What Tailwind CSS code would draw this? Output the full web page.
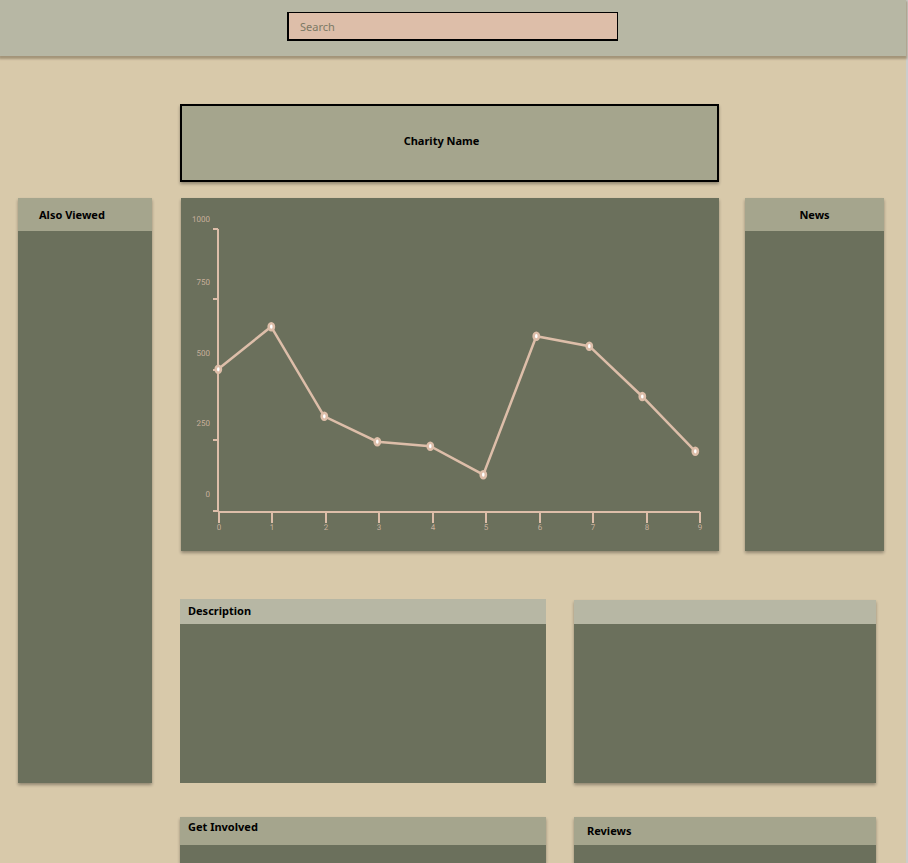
<!DOCTYPE html>
<html lang="en">
<head>
<meta charset="utf-8">
<meta name="viewport" content="width=device-width, initial-scale=1">
<title>Charity Name</title>
<script src="https://cdn.jsdelivr.net/npm/@tailwindcss/browser@4"></script>
</head>
<body class="bg-[#d8c9aa]">
<div class="flex min-h-screen flex-col border-r-2 border-[#cccccc] bg-[#d8c9aa] font-['Noto_Sans',sans-serif] text-[11px] leading-4 text-black">
  <header class="flex h-14 justify-center bg-[#b7b7a4] pt-3 pr-px shadow-[0_2px_2px_1px_#a39479]">
    <input type="search" aria-label="Search" placeholder="Search" class="h-[29px] w-[331px] appearance-none border-t border-r border-b-2 border-l-2 border-black bg-[#ddbea9] px-[11px] pt-px text-[11px] outline-none placeholder:text-[#7b7965]">
  </header>

  <div class="flex flex-1 gap-7 pr-[22px] pl-[18px] pt-12">
    <aside class="mt-[94px] h-[585px] w-[134px] shrink-0 bg-[#6b705c] shadow-[0_2px_3px_#00000055]">
      <h2 class="h-[33px] bg-[#a5a58d] px-[21px] pt-[9px] font-bold">Also Viewed</h2>
    </aside>

    <main class="flex min-w-0 flex-1 flex-col">
      <div class="flex gap-[26px]">
        <div class="min-w-0 flex-1">
          <h1 class="flex h-[78px] items-center justify-center border-2 border-black bg-[#a5a58d] pr-4 pb-1 font-bold shadow-[0_2px_3px_#00000055]">Charity Name</h1>
          <section aria-label="Charity chart" class="mt-4 ml-px bg-[#6b705c] shadow-[0_2px_3px_#00000055]">
            <svg viewBox="181 198 538 353" class="block w-full" role="img" aria-label="Line chart" text-rendering="geometricPrecision">
              <g fill="none" stroke="#ddbea9" stroke-width="2">
                <path d="M213 229H218M213 299H218M213 370H218M213 440H218M213 511H218M218 229V512"/>
                <path d="M218 512H700M219 512V523M272 512V523M326 512V523M379 512V523M433 512V523M486 512V523M540 512V523M593 512V523M647 512V523M700 512V523"/>
                <path stroke-width="2.5" d="M218 369.300L271.100 326.700L324.200 416.300L377.200 441.700L430.300 446.200L483.300 474.700L536.300 336.200L589.300 346.200L642.300 396.500L695.300 451.300"/>
              </g>
              <g fill="#fff" stroke="#ddbea9" stroke-width="2.600">
                <ellipse cx="218.300" cy="369.300" rx="2.600" ry="3.400"/><ellipse cx="271.300" cy="326.700" rx="2.600" ry="3.400"/><ellipse cx="324.300" cy="416.300" rx="2.600" ry="3.400"/><ellipse cx="377.300" cy="441.700" rx="2.600" ry="3.400"/><ellipse cx="430.300" cy="446.200" rx="2.600" ry="3.400"/><ellipse cx="483.300" cy="474.700" rx="2.600" ry="3.400"/><ellipse cx="536.300" cy="336.200" rx="2.600" ry="3.400"/><ellipse cx="589.300" cy="346.200" rx="2.600" ry="3.400"/><ellipse cx="642.300" cy="396.500" rx="2.600" ry="3.400"/><ellipse cx="695.300" cy="451.300" rx="2.600" ry="3.400"/>
              </g>
              <g fill="#ddbea9" fill-opacity="0.85" class="font-['Roboto',sans-serif] text-[8px]" text-anchor="end">
                <text x="210" y="222">1000</text><text x="210" y="285">750</text><text x="210" y="356">500</text><text x="210" y="426">250</text><text x="210" y="497">0</text>
              </g>
              <g fill="#ddbea9" fill-opacity="0.85" class="font-['Roboto',sans-serif] text-[8px]" text-anchor="middle">
                <text x="219" y="530">0</text><text x="272" y="530">1</text><text x="326" y="530">2</text><text x="379" y="530">3</text><text x="433" y="530">4</text><text x="486" y="530">5</text><text x="540" y="530">6</text><text x="593" y="530">7</text><text x="647" y="530">8</text><text x="700" y="530">9</text>
              </g>
            </svg>
          </section>
        </div>
        <aside class="mt-[94px] w-[139px] shrink-0 bg-[#6b705c] shadow-[0_2px_3px_#00000055]">
          <h2 class="h-[33px] bg-[#a5a58d] pt-[9px] text-center font-bold">News</h2>
        </aside>
      </div>

      <div class="mt-12 flex gap-7 pr-2">
        <section class="h-[184px] min-w-0 flex-1 bg-[#6b705c]">
          <h2 class="h-[25px] bg-[#b7b7a4] px-2 pt-1 font-bold">Description</h2>
        </section>
        <section class="mt-px h-[183px] w-[302px] shrink-0 bg-[#6b705c] shadow-[0_2px_3px_#00000055]">
          <div class="h-6 bg-[#b7b7a4]"></div>
        </section>
      </div>

      <div class="mt-[34px] flex flex-1 gap-7 pr-2">
        <section class="min-w-0 flex-1 bg-[#6b705c] shadow-[0_2px_3px_#00000055]">
          <h2 class="h-7 bg-[#a5a58d] px-2 pt-[2px] font-bold">Get Involved</h2>
        </section>
        <section class="w-[302px] shrink-0 bg-[#6b705c] shadow-[0_2px_3px_#00000055]">
          <h2 class="h-7 bg-[#a5a58d] px-[13px] pt-[6px] font-bold">Reviews</h2>
        </section>
      </div>
    </main>
  </div>
</div>
</body>
</html>
